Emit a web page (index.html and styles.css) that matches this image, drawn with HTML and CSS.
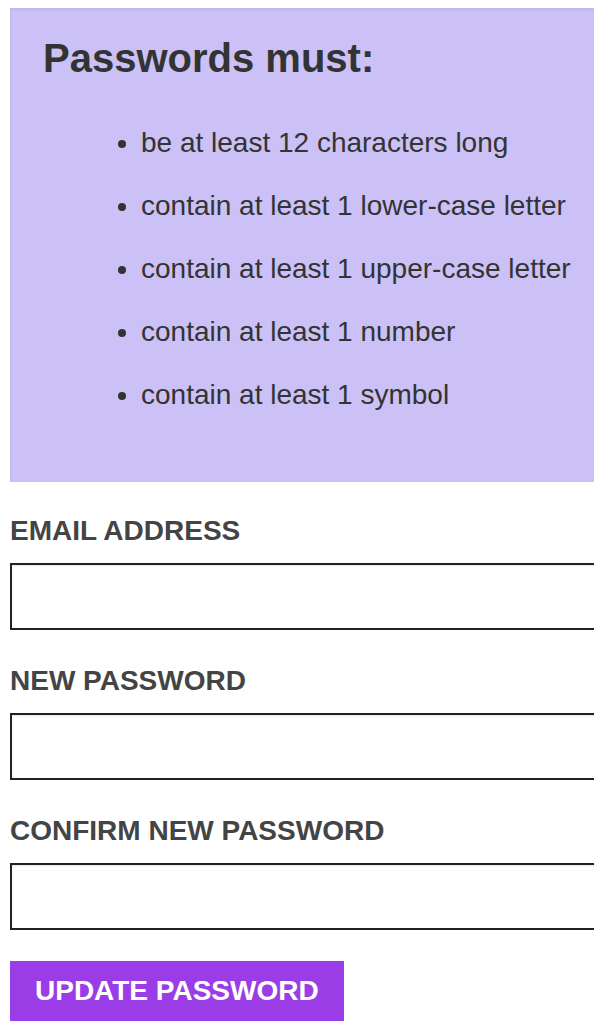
FILE: index.html
```html
<!DOCTYPE html>
<html lang="en">
<head>
  <meta charset="UTF-8" />
  <meta name="viewport" content="width=device-width, initial-scale=1.0"/>
  <title>Update Password</title>
  <link rel="stylesheet" href="styles.css">
</head>
<body>
  <div class="page">
    <div class="rules">
      <h2>Passwords must:</h2>
      <ul>
        <li>be at least 12 characters long</li>
        <li>contain at least 1 lower-case letter</li>
        <li>contain at least 1 upper-case letter</li>
        <li>contain at least 1 number</li>
        <li>contain at least 1 symbol</li>
      </ul>
    </div>
    <form class="pw-form" onsubmit="return false">
      <div class="field">
        <label for="email">EMAIL ADDRESS</label>
        <input type="email" id="email" />
      </div>
      <div class="field">
        <label for="password">NEW PASSWORD</label>
        <input type="password" id="password" />
      </div>
      <div class="field">
        <label for="confirm">CONFIRM NEW PASSWORD</label>
        <input type="password" id="confirm" />
      </div>
      <button type="submit" class="btn-update">UPDATE PASSWORD</button>
    </form>
  </div>
</body>
</html>
```

FILE: styles.css
```css
* { box-sizing: border-box; }
body {
  margin: 8px 0 0 10px;
  font-family: "Liberation Sans", Arial, sans-serif;
  background: #fff;
  color: #333;
  overflow-x: hidden;
}
.page { width: 640px; }

.rules {
  background: #cbc1f7;
  padding: 28px 0 42px 33px;
  box-shadow: inset 1px 2px 3px rgba(0, 0, 0, 0.06);
}
.rules h2 {
  margin: 0 0 44px;
  font-size: 40px;
  line-height: 45px;
  font-weight: bold;
  color: #333;
}
.rules ul {
  margin: 0;
  padding-left: 98px;
}
.rules li {
  font-size: 28px;
  line-height: 35px;
  margin-bottom: 28px;
}

.pw-form { margin-top: 33px; }
.field {
  display: flex;
  flex-direction: column;
  gap: 16px;
  margin-bottom: 35px;
}
.field label {
  font-size: 28px;
  line-height: 32px;
  font-weight: bold;
  color: #444;
}
.field input {
  width: 100%;
  height: 67px;
  margin: 0;
  border: 2px solid #222;
  border-radius: 0;
  box-shadow: inset 0 1px 2px rgba(0, 0, 0, 0.1);
  font-size: 24px;
  padding: 0 12px;
}
.btn-update {
  display: block;
  margin-top: -4px;
  height: 60px;
  padding: 0 25px;
  border: none;
  background: #9b3de6;
  color: #fff;
  font-family: inherit;
  font-size: 28px;
  font-weight: bold;
  line-height: 60px;
  cursor: pointer;
}
```
